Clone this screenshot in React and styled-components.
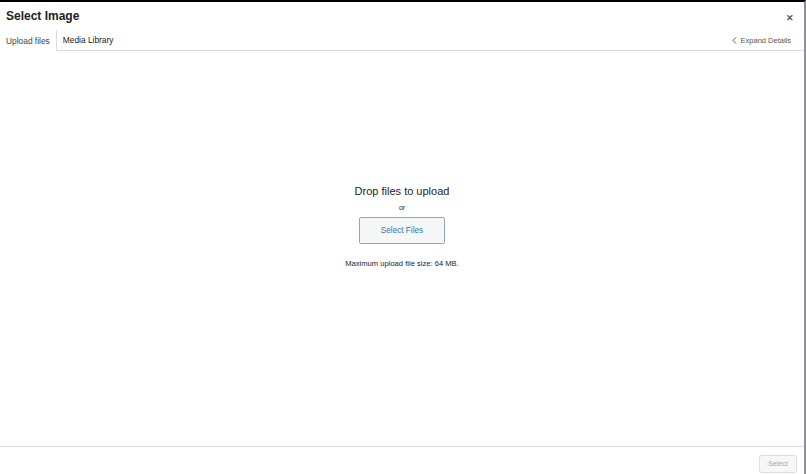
import React, { useState } from 'react';
import styled, { createGlobalStyle } from 'styled-components';

const Global = createGlobalStyle`
  html, body { margin: 0; padding: 0; background: #fff; }
  body { font-family: "Liberation Sans", Arial, sans-serif; color: #1d2327; }
  * { box-sizing: border-box; }
`;

const Modal = styled.div`
  width: 806px;
  height: 474px;
  display: flex;
  flex-direction: column;
  border-top: 2px solid #000;
  border-right: 2px solid #8c8f94;
  background: #fff;
`;

const Header = styled.div`
  height: 28px;
  display: flex;
  align-items: center;
  justify-content: space-between;
  padding: 0 10px 0 6px;
`;

const Title = styled.h1`
  margin: 0;
  font-size: 12px;
  font-weight: 700;
  color: #1d2327;
`;

const Close = styled.button`
  border: 0;
  background: none;
  padding: 0;
  font-size: 9px;
  font-weight: 700;
  color: #50575e;
  cursor: pointer;
  line-height: 1;
  margin-top: 4px;
`;

const TabBar = styled.div`
  height: 21px;
  display: flex;
  align-items: stretch;
  justify-content: space-between;
  border-bottom: 1px solid #dcdcde;
`;

const Tabs = styled.div`
  display: flex;
`;

const Tab = styled.div`
  font-size: 8.4px;
  color: ${({ $active }) => ($active ? '#3c434a' : '#1d2327')};
  background: #fff;
  display: flex;
  align-items: center;
  padding: 0 6px;
  margin-bottom: ${({ $active }) => ($active ? '-1px' : '0')};
  border-right: 1px solid ${({ $active }) => ($active ? '#dcdcde' : '#fff')};
  cursor: pointer;
`;

const Expand = styled.div`
  font-size: 7.5px;
  color: #50575e;
  padding: 0 13px 0 0;
  display: flex;
  align-items: center;
  gap: 4px;
  cursor: pointer;
`;

const Body = styled.div`
  flex: 1;
  display: flex;
  flex-direction: column;
  align-items: center;
  padding-top: 134px;
`;

const Drop = styled.div`
  font-size: 11px;
  color: #1d2327;
`;

const Or = styled.div`
  font-size: 7px;
  color: #1d2327;
  margin-top: 7px;
`;

const SelectFiles = styled.button`
  font-family: inherit;
  margin-top: 6px;
  width: 86px;
  height: 27px;
  border: 1px solid #8fa6c2;
  border-radius: 2px;
  background: #f6f7f7;
  color: #3a72b3;
  font-size: 8.2px;
  cursor: pointer;
`;

const Max = styled.div`
  margin-top: 15px;
  font-size: 7.6px;
  color: #1d2327;
`;

const Footer = styled.div`
  height: 28px;
  border-top: 1px solid #dcdcde;
  display: flex;
  align-items: center;
  justify-content: flex-end;
  padding: 0 7px 0 0;
`;

const SelectBtn = styled.button`
  font-family: inherit;
  margin-top: 6px;
  width: 38px;
  height: 18px;
  font-size: 7px;
  color: #a7aaad;
  background: #f6f7f7;
  border: 1px solid #dcdcde;
  border-radius: 3px;
`;

export default function App() {
  const [tab, setTab] = useState('upload');
  return (
    <>
      <Global />
      <Modal>
        <Header>
          <Title>Select Image</Title>
          <Close aria-label="Close">✕</Close>
        </Header>
        <TabBar>
          <Tabs>
            <Tab $active={tab === 'upload'} onClick={() => setTab('upload')}>Upload files</Tab>
            <Tab $active={tab === 'library'} onClick={() => setTab('library')}>Media Library</Tab>
          </Tabs>
          <Expand>
            <svg width="5" height="7" viewBox="0 0 5 7" fill="none">
              <path d="M4 0.5 L1 3.5 L4 6.5" stroke="#50575e" strokeWidth="1" />
            </svg>
            Expand Details
          </Expand>
        </TabBar>
        <Body>
          <Drop>Drop files to upload</Drop>
          <Or>or</Or>
          <SelectFiles>Select Files</SelectFiles>
          <Max>Maximum upload file size: 64 MB.</Max>
        </Body>
        <Footer>
          <SelectBtn disabled>Select</SelectBtn>
        </Footer>
      </Modal>
    </>
  );
}
